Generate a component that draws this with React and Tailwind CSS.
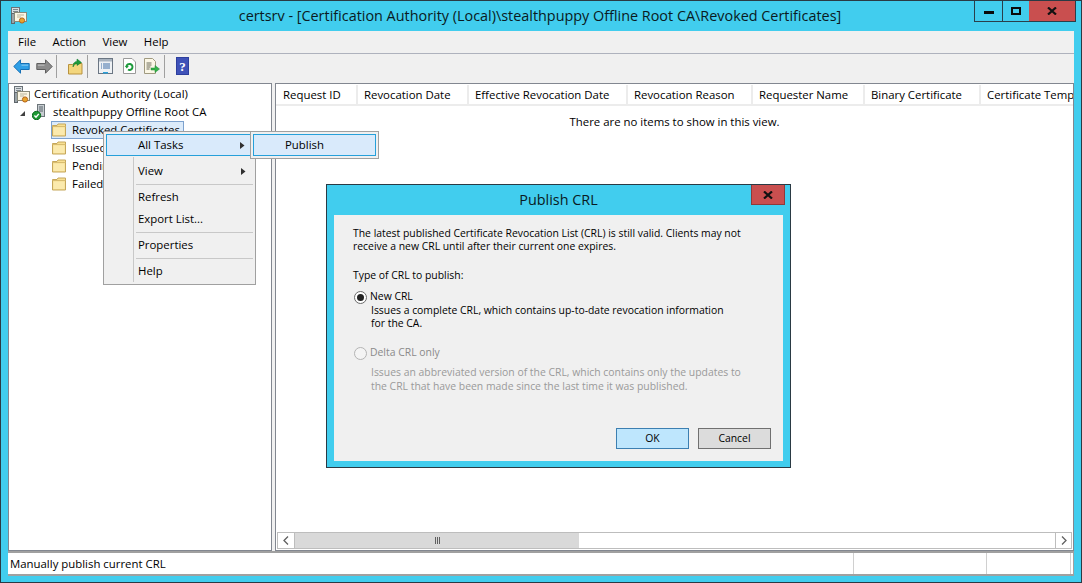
import React from 'react';

const FONT = "font-['Open_Sans','Noto_Sans',sans-serif]";

const columns = [
    { label: 'Request ID', width: 'w-[82px] pl-[7px]' },
    { label: 'Revocation Date', width: 'w-[111px] pl-[6px]' },
    { label: 'Effective Revocation Date', width: 'w-[159px] pl-[6px]' },
    { label: 'Revocation Reason', width: 'w-[125px] pl-[6px]' },
    { label: 'Requester Name', width: 'w-[112px] pl-[6px]' },
    { label: 'Binary Certificate', width: 'w-[116px] pl-[6px]' },
    { label: 'Certificate Template', width: 'flex-1 pl-[6px]' },
];

const CertIcon = () => (
    <svg width="16" height="17" viewBox="0 0 16 17" className="shrink-0">
        <rect x="0.500" y="0.500" width="8" height="6" fill="#d8dde0" stroke="#6b7278" />
        <path d="M2 2.500h5M2 4.500h5" stroke="#7d868c" />
        <rect x="0.500" y="6.500" width="3" height="10" fill="#9aa3a8" stroke="#5f666b" />
        <rect x="3.500" y="5.500" width="12" height="9" fill="#fbf6e4" stroke="#8a8a7a" />
        <path d="M6 8h7M6 10h4" stroke="#b9b39a" />
        <circle cx="11" cy="13.500" r="2.600" fill="#e8a42c" stroke="#b5651d" />
    </svg>
);

const ServerIcon = () => (
    <svg width="13" height="16" viewBox="0 0 13 16" className="shrink-0">
        <rect x="5.500" y="0.500" width="7" height="12" fill="#c7cdd1" stroke="#6d757a" />
        <path d="M7 3h4M7 5h4M7 7h4" stroke="#59636a" />
        <circle cx="4.500" cy="11.500" r="4.200" fill="#1f9a35" stroke="#0d6d20" />
        <path d="M2.400 11.500l1.600 1.700 2.800-3.300" fill="none" stroke="#fff" strokeWidth="1.400" />
    </svg>
);

const FolderIcon = () => (
    <svg width="14" height="14" viewBox="0 0 14 14" className="shrink-0">
        <path d="M0.500 2.500h4.500l1-1.500h7.500v12h-13z" fill="#f8e092" stroke="#c5a75c" />
        <path d="M1.500 4.500h11v7.500h-11z" fill="#fbeaae" />
        <path d="M0.500 3.500h13" stroke="#d8bc70" />
    </svg>
);

const BackIcon = ({ flip, fill, stroke }) => (
    <svg width="17" height="15" viewBox="0 0 17 15" className={flip ? 'shrink-0 -scale-x-100' : 'shrink-0'}>
        <path d="M0.800 7.500L7.500 0.800v3.700h8.700v6H7.500v3.700z" fill={fill} stroke={stroke} />
        <path d="M8.500 5.500h6.700v1.500H8.500z" fill="#fff" fillOpacity="0.300" />
    </svg>
);

const UpFolderIcon = () => (
    <svg width="15" height="17" viewBox="0 0 15 17" className="shrink-0">
        <path d="M0.500 6.500h4l1-1h8.500v10.500h-13.500z" fill="#f3d67d" stroke="#b8923e" />
        <path d="M5 9c0-4 2-5.500 4-5.800V1l4.500 3.500L9 7.500V5.500C7 5.800 6 7 5 9z" fill="#1d9a3c" stroke="#0f7429" strokeWidth="0.500" />
    </svg>
);

const ListIcon = () => (
    <svg width="15" height="16" viewBox="0 0 15 16" className="shrink-0">
        <rect x="0.500" y="0.500" width="14" height="15" fill="#eef1f4" stroke="#6b7683" />
        <rect x="1" y="1" width="13" height="2.500" fill="#a8b3bf" />
        <path d="M3 6h1M5 6h7M3 8h1M5 8h7M3 10h1M5 10h7" stroke="#3f6fa8" />
        <rect x="5" y="14" width="5" height="1.500" fill="#2a9fd8" />
    </svg>
);

const RefreshIcon = () => (
    <svg width="13" height="16" viewBox="0 0 13 16" className="shrink-0">
        <path d="M0.500 0.500h8.500l3.500 3.500v11.500h-12z" fill="#fff" stroke="#9a9a9a" />
        <path d="M3.500 8.500a3 3 0 1 1 1.500 3" fill="none" stroke="#1d9a3c" strokeWidth="2" />
        <path d="M1.800 8h4l-2 2.500z" fill="#1d9a3c" />
    </svg>
);

const ExportIcon = () => (
    <svg width="16" height="16" viewBox="0 0 16 16" className="shrink-0">
        <path d="M0.500 0.500h8l3 3v12h-11z" fill="#fbf7e6" stroke="#a09a80" />
        <path d="M2.500 5h5M2.500 7h5M2.500 9h4M2.500 11h3" stroke="#6a6a5a" />
        <path d="M7 10h4V7.500l4.500 3.500-4.500 3.500V12H7z" fill="#35b24a" stroke="#1c8a33" strokeWidth="0.500" />
    </svg>
);

const HelpIcon = () => (
    <svg width="13" height="18" viewBox="0 0 13 18" className="shrink-0">
        <rect width="13" height="18" fill="#2d3f9e" />
        <rect x="1" y="1" width="11" height="16" fill="#3f52b8" />
        <text x="6.500" y="14" textAnchor="middle" fontSize="13" fontWeight="700" fontFamily="Liberation Serif, serif" fill="#fff">?</text>
    </svg>
);

const Sep = () => <div className="w-px h-[23px] bg-[#a0a0a0] shrink-0" />;

const Caret = () => (
    <svg width="5" height="7" viewBox="0 0 5 7" className="shrink-0">
        <path d="M0 0l4.500 3.500L0 7z" fill="#303030" />
    </svg>
);

const TreeRow = ({ label, selected }) => (
    <div className="h-[18px] flex items-center ml-[43px]">
        <div className={`h-[18px] flex items-center gap-[6px] ${selected ? 'bg-[#dcebfa] border border-[#7da2ce] pr-[3px] -ml-px' : ''}`}>
            <FolderIcon />
            <span>{label}</span>
        </div>
    </div>
);

const MenuItem = ({ label, arrow, active }) => (
    <div className={`h-[22px] flex items-center pr-[7px] ${active ? 'bg-[#d9eafb] border border-[#26a0da]' : ''}`}>
        <span className={`flex-1 ${active ? 'ml-[31px]' : 'ml-[32px]'}`}>{label}</span>
        {arrow && <Caret />}
    </div>
);

const MenuSep = () => <div className="h-[4px] ml-[30px] flex items-center"><div className="h-px w-full bg-[#c8c8c8]" /></div>;

const App = () => {
    return (
        <div className={`${FONT} relative w-[1082px] h-[583px] overflow-hidden bg-[#41cdee] border border-[#2a3a44] text-[11.4px] text-black flex flex-col`}>
            {/* title bar */}
            <div className="h-[30px] shrink-0 relative flex items-center justify-center">
                <div className="absolute left-[10px] top-[6px]"><CertIcon /></div>
                <span className="text-[14.4px] text-[#0a1a22] -mt-[1px] -ml-[2px]">certsrv - [Certification Authority (Local)\stealthpuppy Offline Root CA\Revoked Certificates]</span>
                <div className="absolute right-[5px] top-0 h-[21px] flex border border-t-0 border-[#2a3f4a]">
                    <div className="w-[28px] flex items-center justify-center border-r border-[#2a3f4a]">
                        <div className="w-[10px] h-[3px] bg-[#0a0a0a] mt-[2px]" />
                    </div>
                    <div className="w-[26px] flex items-center justify-center">
                        <div className="w-[10px] h-[8px] border-2 border-[#0a0a0a]" />
                    </div>
                    <div className="w-[46px] flex items-center justify-center bg-[#c94f4f]">
                        <svg width="10" height="8" viewBox="0 0 10 8"><path d="M1 0.500l8 7M9 0.500l-8 7" stroke="#111" strokeWidth="2.200" /></svg>
                    </div>
                </div>
            </div>

            <div className="flex-1 mx-[7px] mb-[6px] flex flex-col bg-[#f0f0f0] min-h-0">
                {/* menu */}
                <div className="h-[22px] shrink-0 flex items-center pl-[10px] gap-[16.5px]">
                    <span>File</span><span>Action</span><span>View</span><span>Help</span>
                </div>
                <div className="h-px bg-[#aeb2bd] shrink-0" />
                {/* toolbar */}
                <div className="h-[27px] shrink-0 flex items-center pl-[5px] pb-[3px]">
                    <BackIcon fill="#2f9fe6" stroke="#1770b5" />
                    <div className="w-[6px]" />
                    <BackIcon flip fill="#8b8b8b" stroke="#5e5e5e" />
                    <div className="w-[3px]" />
                    <Sep />
                    <div className="w-[11px]" />
                    <UpFolderIcon />
                    <div className="w-[4px]" />
                    <Sep />
                    <div className="w-[10px]" />
                    <ListIcon />
                    <div className="w-[10px]" />
                    <RefreshIcon />
                    <div className="w-[8px]" />
                    <ExportIcon />
                    <div className="w-[4px]" />
                    <Sep />
                    <div className="w-[11px]" />
                    <HelpIcon />
                </div>

                {/* panes */}
                <div className="flex-1 flex min-h-0 mt-[2px]">
                    <div className="w-[264px] shrink-0 bg-white border border-[#828790] pt-px">
                        <div className="h-[18px] flex items-center gap-[4px] pl-[5px]"><CertIcon /><span>Certification Authority (Local)</span></div>
                        <div className="h-[18px] flex items-center pl-[10px]">
                            <svg width="7" height="7" viewBox="0 0 7 7" className="shrink-0 mt-[3px]"><path d="M6 1v5H1z" fill="#404040" /></svg>
                            <div className="w-[6px]" />
                            <ServerIcon />
                            <span className="ml-[8px]">stealthpuppy Offline Root CA</span>
                        </div>
                        <TreeRow label="Revoked Certificates" selected />
                        <TreeRow label="Issued Certificates" />
                        <TreeRow label="Pending Requests" />
                        <TreeRow label="Failed Requests" />
                    </div>
                    <div className="w-[3px] shrink-0" />
                    <div className="flex-1 min-w-0 bg-white border border-[#828790] flex flex-col">
                        <div className="h-[22px] shrink-0 flex overflow-hidden pt-px">
                            {columns.map((col) => (
                                <div key={col.label} className={`${col.width} shrink-0 pt-[1px] flex items-center whitespace-nowrap overflow-hidden border-r-2 border-b-2 border-[#ececec] last:border-r-0`}>{col.label}</div>
                            ))}
                        </div>
                        <div className="flex-1 text-center pt-[7px]">There are no items to show in this view.</div>
                        <div className="h-[17px] shrink-0 mx-px mb-px border border-[#bdbdbd] flex">
                            <div className="w-[17px] flex items-center justify-center border-r border-[#bdbdbd]">
                                <svg width="6" height="9" viewBox="0 0 6 9"><path d="M5 0.500L1 4.500l4 4" fill="none" stroke="#606060" strokeWidth="1.300" /></svg>
                            </div>
                            <div className="w-[284px] bg-[#d9d9d9] flex items-center justify-center gap-px">
                                <div className="w-px h-[7px] bg-[#606060]" /><div className="w-px h-[7px] bg-[#606060]" /><div className="w-px h-[7px] bg-[#606060]" />
                            </div>
                            <div className="flex-1" />
                            <div className="w-[16px] flex items-center justify-center border-l border-[#bdbdbd]">
                                <svg width="6" height="9" viewBox="0 0 6 9"><path d="M1 0.500L5 4.500l-4 4" fill="none" stroke="#606060" strokeWidth="1.300" /></svg>
                            </div>
                        </div>
                    </div>
                </div>

                {/* status bar */}
                <div className="h-[25px] shrink-0 bg-white border-t-2 border-b-2 border-r border-[#a0a0a0] flex items-center">
                    <div className="w-[845px] pl-[2px]">Manually publish current CRL</div>
                    <div className="w-[133px] h-full border-l border-[#d0d0d0]" />
                    <div className="w-[85px] h-full border-l border-r border-[#d0d0d0]" />
                </div>
            </div>

            {/* context menu */}
            <div className="absolute left-[102px] top-[130px] w-[153px] h-[154px] bg-[#f0f0f0] border border-[#a0a0a0] p-[2px]">
                <div className="absolute left-[29px] top-[25px] bottom-[2px] w-px bg-[#c8c8c8]" />
                <MenuItem label="All Tasks" arrow active />
                <div className="h-[4px]" />
                <MenuItem label="View" arrow />
                <MenuSep />
                <MenuItem label="Refresh" />
                <MenuItem label="Export List..." />
                <MenuSep />
                <MenuItem label="Properties" />
                <MenuSep />
                <MenuItem label="Help" />
            </div>

            {/* submenu */}
            <div className="absolute left-[249px] top-[130px] w-[129px] h-[28px] bg-[#f0f0f0] border border-[#a0a0a0] p-[2px]">
                <MenuItem label="Publish" active />
            </div>

            {/* dialog */}
            <div className="absolute left-[325px] top-[183px] w-[465px] h-[284px] bg-[#41cdee] border border-[#2a3a44] flex flex-col px-[7px] pb-[6px] text-[10.4px]">
                <div className="h-[30px] shrink-0 flex items-center justify-center text-[14.4px] text-[#0a1a22] relative">
                    Publish CRL
                    <div className="absolute right-[-2px] top-0 w-[34px] h-[20px] bg-[#c94f4f] border border-t-0 border-[#8f3a3a] flex items-center justify-center">
                        <svg width="10" height="8" viewBox="0 0 10 8"><path d="M1 0.500l8 7M9 0.500l-8 7" stroke="#111" strokeWidth="2.200" /></svg>
                    </div>
                </div>
                <div className="flex-1 bg-[#f0f0f0] pl-[19px] pr-[12px] pt-[12px] flex flex-col">
                    <p className="leading-[13px]">The latest published Certificate Revocation List (CRL) is still valid. Clients may not<br />receive a new CRL until after their current one expires.</p>
                    <p className="mt-[16px] leading-[13px]">Type of CRL to publish:</p>
                    <div className="mt-[8px] h-[14px] flex items-center gap-[3px] pl-px">
                        <div className="w-[13px] h-[13px] rounded-full border border-[#6a6a6a] bg-white flex items-center justify-center">
                            <div className="w-[7px] h-[7px] rounded-full bg-[#222]" />
                        </div>
                        <span>New CRL</span>
                    </div>
                    <p className="ml-[18px] leading-[13px]">Issues a complete CRL, which contains up-to-date revocation information<br />for the CA.</p>
                    <div className="mt-[16px] h-[14px] flex items-center gap-[3px] pl-px text-[#8a8a8a]">
                        <div className="w-[13px] h-[13px] rounded-full border border-[#b4b4b4] bg-[#f4f4f4]" />
                        <span>Delta CRL only</span>
                    </div>
                    <p className="ml-[18px] mt-[5px] leading-[14px] text-[#9a9a9a]">Issues an abbreviated version of the CRL, which contains only the updates to<br />the CRL that have been made since the last time it was published.</p>
                    <div className="flex-1" />
                    <div className="flex justify-end gap-[9px] mb-[12px]">
                        <button className="w-[73px] h-[21px] bg-[#bee6fd] border border-[#3c7fb1]">OK</button>
                        <button className="w-[73px] h-[21px] bg-[#dcdcdc] border border-[#707070]">Cancel</button>
                    </div>
                </div>
            </div>
        </div>
    );
};

export default App;
